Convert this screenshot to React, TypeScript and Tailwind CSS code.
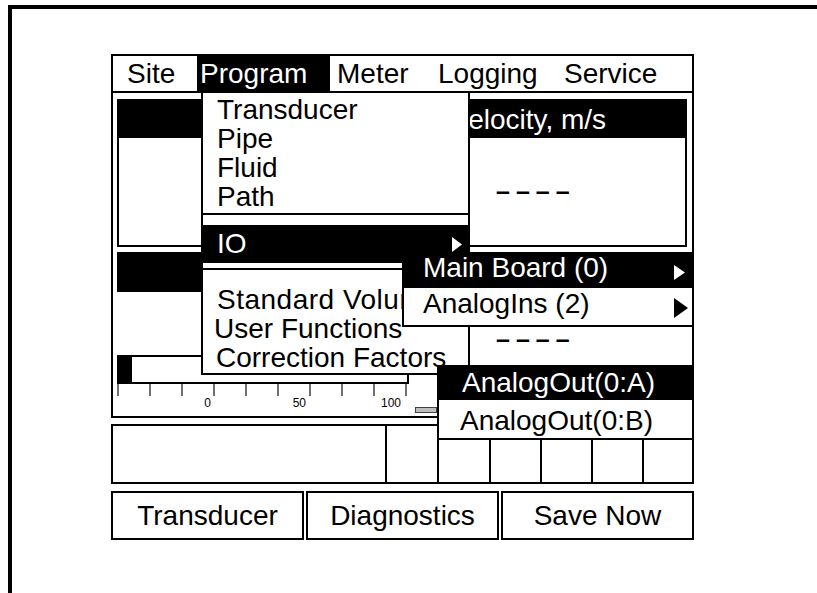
import React from "react";

/* ── little arrow for sub menus ── */
const Tri = ({ w, h, fill }: { w: number; h: number; fill: string }) => (
  <svg width={w} height={h} viewBox={`0 0 ${w} ${h}`} className="block shrink-0">
    <polygon points={`0,0 ${w},${h / 2} 0,${h}`} fill={fill} />
  </svg>
);

/* ── "no value" placeholder ── */
const Dashes = ({ className }: { className: string }) => (
  <div className={`text-[25px] font-bold leading-[25px] tracking-[6px] whitespace-nowrap ${className}`}>––––</div>
);

/* ── bar graph scale ── */
const Scale = () => (
  <svg width="292" height="26" className="block shrink-0">
    {Array.from({ length: 10 }).map((_, i) => (
      <line key={i} x1={1 + 32 * i} x2={1 + 32 * i} y1={0} y2={12} stroke="#333" strokeWidth={1.4} />
    ))}
    {[
      { x: 94, t: "0" },
      { x: 189, t: "50" },
      { x: 284, t: "100" },
    ].map((l) => (
      <text key={l.t} x={l.x} y={23} fontSize={12} textAnchor="end" fontFamily="Liberation Sans, Arial, sans-serif">
        {l.t}
      </text>
    ))}
  </svg>
);

const menus = [
  { label: "Site", cls: "w-[84px] pl-[14px]" },
  { label: "Program", cls: "w-[133px] pl-[3px] bg-black text-white" },
  { label: "Meter", cls: "w-[100px] pl-[7px]" },
  { label: "Logging", cls: "w-[125px] pl-[8px]" },
  { label: "Service", cls: "flex-1 pl-[9px]" },
];

const App = () => (
  <div className="w-[817px] h-[593px] overflow-hidden bg-white text-black font-['Liberation_Sans',Arial,sans-serif]">
    <div className="ml-[8px] mt-[5px] h-[588px] border-l-4 border-t-4 border-black pl-[99px] pt-[45px]">
      <div className="relative w-[583px]">
        {/* screen */}
        <div className="h-[364px] border-2 border-black flex flex-col">
          <div className="h-[37px] shrink-0 border-b-2 border-black flex text-[28px] leading-[35px]">
            {menus.map((m) => (
              <div key={m.label} className={`whitespace-nowrap ${m.cls}`}>
                {m.label}
              </div>
            ))}
          </div>

          <div className="flex-1 pt-[6px] pl-[4px] pr-[5px] flex flex-col">
            {/* top row */}
            <div className="flex gap-[5px] h-[148px] shrink-0">
              <div className="w-[323px] border-2 border-black">
                <div className="h-[37px] bg-black" />
              </div>
              <div className="w-[242px] border-2 border-black flex flex-col">
                <div className="h-[37px] bg-black text-white text-[28px] leading-[37px] pl-[4px] whitespace-nowrap">
                  Velocity, m/s
                </div>
                <Dashes className="mt-[41px] pl-[49px]" />
              </div>
            </div>

            {/* bottom row */}
            <div className="flex gap-[5px] mt-[5px] flex-1">
              <div className="w-[323px]">
                <div className="h-[40px] bg-black" />
                <div className="mt-[63px] w-[292px] h-[29px] border-2 border-black">
                  <div className="w-[13px] h-full bg-black" />
                </div>
                <div className="flex">
                  <Scale />
                  <div className="ml-[6px] mt-[23px] w-[22px] h-[6px] border border-[#444] bg-[#bdbdbd]" />
                </div>
              </div>
              <div className="w-[242px]">
                <div className="h-[40px] bg-black" />
                <Dashes className="mt-[35px] pl-[51px]" />
              </div>
            </div>
          </div>
        </div>

        {/* status strip */}
        <div className="mt-[6px] h-[60px] border-2 border-black flex">
          <div className="w-[272px]" />
          <div className="w-[52px] border-l-2 border-black" />
          <div className="w-[52px] border-l-2 border-black" />
          <div className="w-[51px] border-l-2 border-black" />
          <div className="w-[51px] border-l-2 border-black" />
          <div className="w-[51px] border-l-2 border-black" />
          <div className="flex-1 border-l-2 border-black" />
        </div>

        {/* soft keys */}
        <div className="mt-[7px] flex gap-[2px]">
          {["Transducer", "Diagnostics", "Save Now"].map((k) => (
            <div key={k} className="w-[193px] h-[49px] border-2 border-black flex items-center justify-center text-[28px]">
              {k}
            </div>
          ))}
        </div>

        {/* Program drop down */}
        <div className="absolute left-[90px] top-[39px] w-[269px] h-[282px] bg-white border-x-2 border-b-2 border-black text-[28px]">
          <div className="pt-[2px] leading-[29px] pl-[14px]">
            <div>Transducer</div>
            <div>Pipe</div>
            <div>Fluid</div>
            <div>Path</div>
          </div>
          <div className="mt-[2px] h-[2px] bg-black" />
          <div className="mt-[10px] h-[38px] bg-black text-white flex items-center justify-between pl-[14px] pr-[6px] leading-[38px]">
            <span>IO</span>
            <Tri w={10} h={15} fill="#fff" />
          </div>
          <div className="mt-[5px] h-[2px] bg-black" />
          <div className="pt-[15px] leading-[29px] whitespace-nowrap">
            <div className="pl-[14px] tracking-[0.5px]">Standard Volume</div>
            <div className="pl-[11px]">User Functions</div>
            <div className="pl-[13px]">Correction Factors</div>
          </div>
        </div>

        {/* IO sub menu */}
        <div className="absolute left-[291px] top-[198px] w-[292px] text-[28px] leading-[32px]">
          <div className="h-[36px] bg-black text-white flex justify-between pl-[21px] pr-[9px]">
            <span>Main Board (0)</span>
            <div className="mt-[13px]">
              <Tri w={11} h={15} fill="#fff" />
            </div>
          </div>
          <div className="h-[39px] bg-white border-x-2 border-b-2 border-black flex justify-between pl-[19px] pr-[4px]">
            <span>AnalogIns (2)</span>
            <div className="mt-[10px]">
              <Tri w={14} h={20} fill="#000" />
            </div>
          </div>
        </div>

        {/* Main Board sub menu */}
        <div className="absolute left-[326px] top-[311px] w-[257px] text-[28px]">
          <div className="h-[35px] bg-black text-white pl-[25px] leading-[35px]">AnalogOut(0:A)</div>
          <div className="h-[40px] bg-white border-x-2 border-b-2 border-black pl-[21px] pt-[2px] leading-[38px]">AnalogOut(0:B)</div>
        </div>
      </div>
    </div>
  </div>
);

export default App;
